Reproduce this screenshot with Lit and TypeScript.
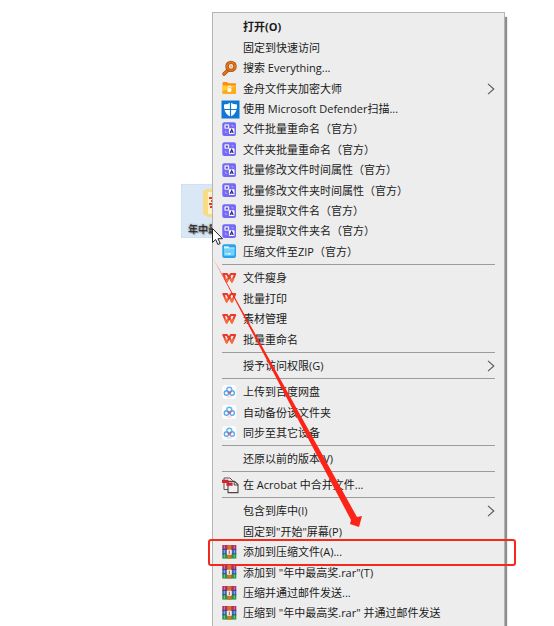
import { LitElement, html, svg, css, nothing, type TemplateResult } from "lit";
import { customElement, property } from "lit/decorators.js";
import { classMap } from "lit/directives/class-map.js";

type Entry = { text: string; icon?: string; bold?: boolean; sub?: boolean; marked?: boolean };

const GROUPS: Entry[][] = [
  [
    { text: "打开(O)", bold: true },
    { text: "固定到快速访问" },
    { text: "搜索 Everything...", icon: "search" },
    { text: "金舟文件夹加密大师", icon: "lockfolder", sub: true },
    { text: "使用 Microsoft Defender扫描...", icon: "shield" },
    { text: "文件批量重命名（官方）", icon: "rename" },
    { text: "文件夹批量重命名（官方）", icon: "rename" },
    { text: "批量修改文件时间属性（官方）", icon: "rename" },
    { text: "批量修改文件夹时间属性（官方）", icon: "rename" },
    { text: "批量提取文件名（官方）", icon: "rename" },
    { text: "批量提取文件夹名（官方）", icon: "rename" },
    { text: "压缩文件至ZIP（官方）", icon: "zip" },
  ],
  [
    { text: "文件瘦身", icon: "wps" },
    { text: "批量打印", icon: "wps" },
    { text: "素材管理", icon: "wps" },
    { text: "批量重命名", icon: "wps" },
  ],
  [{ text: "授予访问权限(G)", sub: true }],
  [
    { text: "上传到百度网盘", icon: "cloud" },
    { text: "自动备份该文件夹", icon: "cloud" },
    { text: "同步至其它设备", icon: "cloud" },
  ],
  [{ text: "还原以前的版本(V)" }],
  [{ text: "在 Acrobat 中合并文件...", icon: "acrobat" }],
  [
    { text: "包含到库中(I)", sub: true },
    { text: "固定到\"开始\"屏幕(P)" },
    { text: "添加到压缩文件(A)...", icon: "rar", marked: true },
    { text: "添加到 \"年中最高奖.rar\"(T)", icon: "rar" },
    { text: "压缩并通过邮件发送...", icon: "rar" },
    { text: "压缩到 \"年中最高奖.rar\" 并通过邮件发送", icon: "rar" },
  ],
];

const ICONS: Record<string, TemplateResult> = {
  search: svg`
    <path d="M6.6 9.4 2 14" stroke="#b0500f" stroke-width="3.6" stroke-linecap="round"/>
    <path d="M6.6 9.4 2 14" stroke="#e07a20" stroke-width="1.8" stroke-linecap="round"/>
    <circle cx="9" cy="6.4" r="4" fill="#f6ece2" stroke="#b0500f" stroke-width="3.4"/>
    <circle cx="9" cy="6.4" r="4" fill="none" stroke="#e07a20" stroke-width="1.8"/>
    <circle cx="9" cy="6.4" r="1.4" fill="#eebb88"/>`,
  lockfolder: svg`
    <path d="M.6 3Q.6 2 1.6 2H5l1.4 1.2h6.8q.8 0 .8.8v9q0 1-1 1H1.6q-1 0-1-1z" fill="#ff8a14"/>
    <path d="M.6 5.4H14V13q0 1-1 1H1.6q-1 0-1-1z" fill="#ffd02e"/>
    <path d="M.6 11 14 6v7q0 1-1 1H1.6q-1 0-1-1z" fill="#ffab1e"/>
    <path d="M6 8.6V7.4a1.4 1.4 0 0 1 2.8 0v1.2" fill="none" stroke="#fff" stroke-width="1"/>
    <rect x="5.400" y="8.200" width="4" height="3.800" rx="1.400" fill="#fff"/>`,
  shield: svg`
    <path d="M-.5-.5h18v18h-18z" fill="#0f78d4"/>
    <path d="M8.500 1.600Q11 3.400 15 3.600C15.200 9.600 13.200 13.600 8.500 15.800 3.800 13.600 1.800 9.600 2 3.600Q6 3.400 8.500 1.600z" fill="#fff"/>
    <path d="M8.500 1v15M1.500 8.500h14" stroke="#0f78d4" stroke-width="1.200"/>`,
  rename: svg`
    <rect x=".3" y="1.300" width="13.700" height="13.700" rx="2" fill="#7369f6"/>
    <rect x="2.400" y="3.200" width="4.800" height="4.600" rx=".8" fill="#e9e7ff"/>
    <path d="M3.800 4.600h2v2h-2z" fill="#5248b8"/>
    <rect x="6.900" y="7.300" width="5.600" height="5.800" rx=".8" fill="#fff"/>
    <path d="M8.100 12.100 9.700 8.600 11.300 12.100M8.800 11h1.800" stroke="#2e2876" stroke-width="1.100" fill="none"/>
    <path d="M3.400 9.600v1.800h1.800M9.400 4.400h1.600v1.400" stroke="#b9b3ff" stroke-width=".8" fill="none"/>`,
  zip: svg`
    <rect x=".3" y="1.300" width="13.700" height="13.700" rx="2" fill="#27a5ec"/>
    <path d="M2 5.200h10.600v6q0 1.600-1.600 1.600H2z" fill="#6fd0fb"/>
    <path d="M2 3.200h4.400l1 1.200h5.200v1.200H2z" fill="#d8f5ff"/>
    <path d="M3.400 10.800h1.200M5.600 10.800h3" stroke="#fff" stroke-width="1.200"/>`,
  wps: svg`
    <path d="M1.200 4H5L6.900 7.500M1.400 4.200 4.700 11.600 8.800 4H13.200L9.900 11.600 7.200 6.200" fill="none" stroke="#e93a2a" stroke-width="2" stroke-linejoin="round" stroke-linecap="round"/>
    <path d="M3 8 4.700 11.600 6 9.400M8.600 9 9.900 11.600 11.200 8.800" fill="none" stroke="#f5713a" stroke-width="1.800" stroke-linecap="round" stroke-linejoin="round"/>`,
  cloud: svg`
    <rect x=".3" y="1" width="14" height="14" rx="3" fill="#fdfdff"/>
    <circle cx="7.300" cy="5.800" r="2.500" fill="none" stroke="#62b8ee" stroke-width="1.400"/>
    <circle cx="4.500" cy="9" r="2.200" fill="none" stroke="#5aa9ea" stroke-width="1.400"/>
    <circle cx="10.200" cy="9" r="2.200" fill="none" stroke="#5aa9ea" stroke-width="1.400"/>
    <path d="M5.800 7.400 7.400 9.200 9.200 7.200" fill="none" stroke="#e5566c" stroke-width="1.300"/>
    <path d="M5 13h4.600" stroke="#f3b6bd" stroke-width=".8"/>`,
  acrobat: svg`
    <path d="M2 1h6l2.500 2.500v9H2z" fill="#f4f2f2" stroke="#5c5353" stroke-width="1"/>
    <path d="M6 4.400h6.500L16 7.600v8H6z" fill="#f1efef" stroke="#4c4646" stroke-width="1.100"/>
    <path d="M12.200 4.400V8H16" fill="none" stroke="#4c4646" stroke-width="1"/>
    <path d="M0 2.800h6.400V5.600h4.200v3.200H4.400V6H0z" fill="#d3242c"/>`,
  rar: svg`
    <rect x=".3" y="1" width="14" height="4.400" fill="#b02f62"/>
    <rect x=".3" y="5.400" width="14" height="4.400" fill="#3a62c8"/>
    <rect x=".3" y="9.800" width="14" height="4.800" fill="#2b9445"/>
    <path d="M.3 5.400h14M.3 9.800h14" stroke="#2c2a50" stroke-width=".7"/>
    <path d="M2.400 1.500v3.400M12.300 1.500v3.400" stroke="#e07aa8" stroke-width=".9"/>
    <path d="M2.400 6v3.200M12.300 6v3.200" stroke="#8fb4f2" stroke-width=".9"/>
    <path d="M2.400 10.400v3.200M12.300 10.400v3.200" stroke="#7ed486" stroke-width=".9"/>
    <rect x="5.300" y="1" width="4" height="13.600" fill="#d8702a"/>
    <rect x="4.800" y="5.800" width="5" height="5" rx=".6" fill="#f3ece2"/>
    <path d="M7.300 6.600v3.400" stroke="#b0552a" stroke-width="1"/>`,
};

@customElement("menu-entry")
export class MenuEntry extends LitElement {
  @property({ attribute: false }) entry!: Entry;

  static styles = css`
    :host { display: block; }
    .row {
      position: relative;
      display: grid;
      grid-template-columns: 17px 1fr auto;
      column-gap: 4px;
      align-items: center;
      box-sizing: border-box;
      width: 100%;
      height: 100%;
      padding: 0;
      border: 0;
      background: none;
      color: #1a1a1a;
      font: 11px/20px "Open Sans", "Noto Sans CJK SC", sans-serif;
      text-align: left;
      white-space: nowrap;
    }
    .bold { font-weight: 700; }
    .icon { width: 17px; height: 17px; overflow: visible; }
    .chevron { width: 8px; height: 12px; }
    .marked::after {
      content: "";
      position: absolute;
      inset: -3px -21px -4px -14px;
      border: 2px solid #f5281c;
      border-radius: 3px;
    }
  `;

  render() {
    const { text, icon, bold, sub, marked } = this.entry;
    return html`
      <button class=${classMap({ row: true, bold: !!bold, marked: !!marked })} role="menuitem" type="button">
        <svg class="icon" viewBox="0 0 17 17" fill="none" aria-hidden="true">${icon ? ICONS[icon] : nothing}</svg>
        <span>${text}</span>
        ${sub
          ? html`<svg class="chevron" viewBox="0 0 8 12" aria-hidden="true">
              <path d="M1 .8 6.800 6 1 11.200" fill="none" stroke="#55555c" stroke-width="1.1" />
            </svg>`
          : nothing}
      </button>
    `;
  }
}

@customElement("app-root")
export class AppRoot extends LitElement {
  static styles = css`
    :host { display: block; }
    .desktop {
      position: relative;
      display: grid;
      box-sizing: border-box;
      height: 100vh;
      padding: 12px 49px 0 212px;
      overflow: hidden;
      background: #fff;
    }
    .folder {
      position: absolute;
      left: 181px;
      top: 184px;
      box-sizing: border-box;
      width: 64px;
      height: 54px;
      border: 1px dotted #c3dcf2;
      background: #dae8f6;
      display: grid;
      grid-template-rows: 36px 16px;
      justify-items: center;
    }
    .folder-icon { width: 20px; height: 28px; margin-top: 4px; }
    .folder-name {
      font: 10px/16px "Open Sans", "Noto Sans CJK SC", sans-serif;
      color: #222;
      text-shadow: 0 0 2px #555, 1px 1px 1px #666;
      white-space: nowrap;
    }
    .menu {
      position: relative;
      box-sizing: border-box;
      padding: 4px 9px 0;
      border: 1px solid #b4b4b4;
      border-bottom: 0;
      background: #ededed;
      box-shadow: 2px 5px 1px #8e8e8e;
      min-height: 0;
    }
    .entry { height: 20px; }
    .entry:nth-child(5n + 2), .entry:nth-child(5n + 4) { height: 21px; }
    .rule { height: 1px; margin: 2px 0 3px; border: 0; background: #9c9c9c; }
    .arrow {
      position: absolute;
      left: 212px;
      top: 256px;
      width: 152px;
      height: 272px;
      pointer-events: none;
    }
    .pointer { position: absolute; left: 211px; top: 227px; width: 13px; height: 19px; }
  `;

  render() {
    return html`
      <main class="desktop">
        <div class="folder">
          <svg class="folder-icon" viewBox="0 0 20 28" aria-hidden="true">
            <path d="M0 2 4 0h16v28H5L0 25z" fill="#f8dc84" />
            <path d="M5 3h14v22H5z" fill="#fdf3cf" />
            <path d="M6 9h9M8 12h7M6 15h9M7 18h8" stroke="#dc3a32" stroke-width="2" />
          </svg>
          <span class="folder-name">年中最高奖</span>
        </div>
        <div class="menu" role="menu">
          ${GROUPS.map(
            (group, i) => html`
              ${i ? html`<hr class="rule" />` : nothing}
              <div role="group">
                ${group.map((entry) => html`<menu-entry class="entry" .entry=${entry}></menu-entry>`)}
              </div>
            `
          )}
        </div>
        <svg class="arrow" viewBox="0 0 152 272" aria-hidden="true">
          <path d="M1 2 145 261 150 260 147 271 138 268 139 264z" fill="#fb2416" />
        </svg>
        <svg class="pointer" viewBox="0 0 13 19" aria-hidden="true">
          <path d="M1.500 1.500V15.500L4.700 12.500 6.900 17.500 9.200 16.500 7 11.700H11.500z" fill="#fff" stroke="#222" stroke-width="1" />
        </svg>
      </main>
    `;
  }
}
